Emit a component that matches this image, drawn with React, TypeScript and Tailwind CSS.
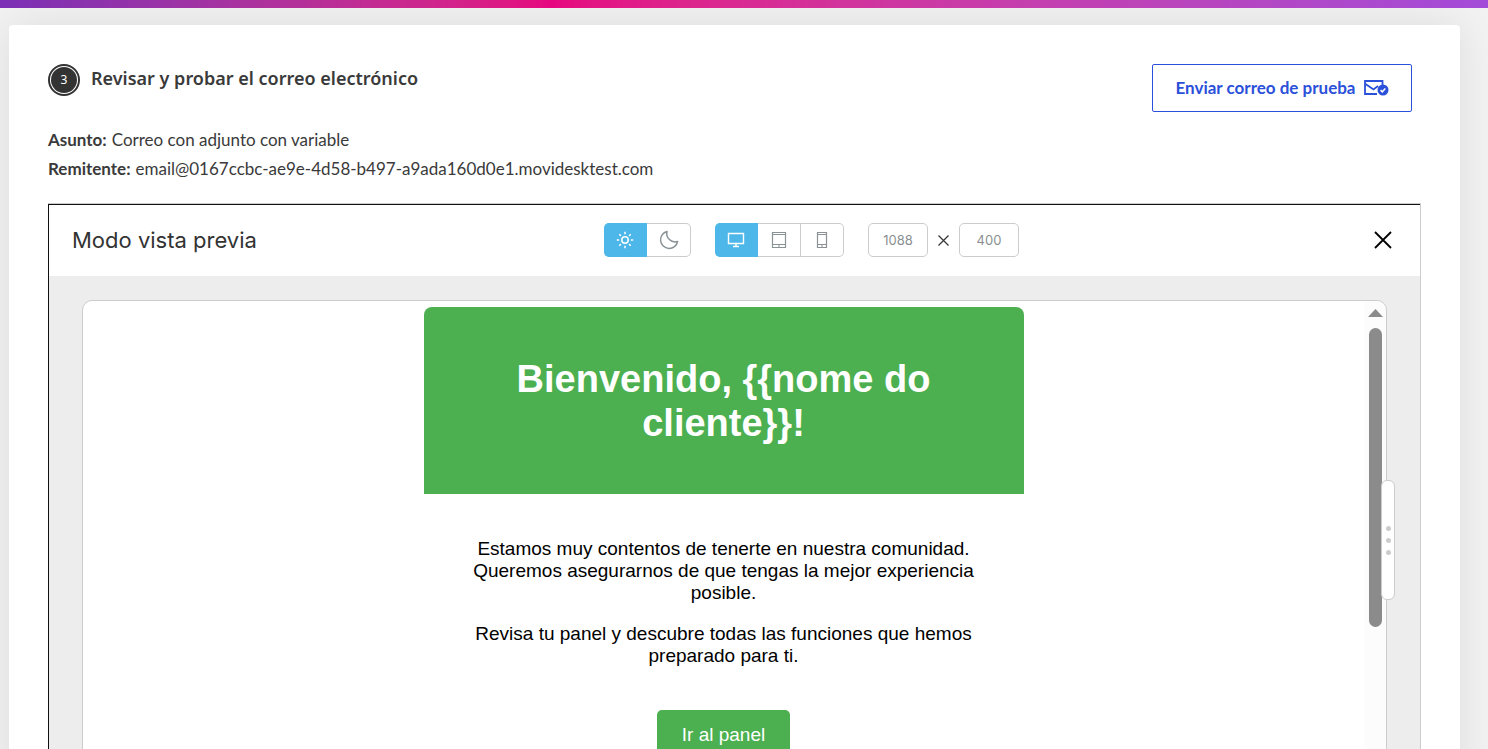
import { useState } from "react";

type Device = "desktop" | "tablet" | "mobile";

const DEVICES: { id: Device; label: string }[] = [
  { id: "desktop", label: "Escritorio" },
  { id: "tablet", label: "Tableta" },
  { id: "mobile", label: "Móvil" },
];

export default function App() {
  return (
    <div className="flex h-screen flex-col overflow-hidden bg-[#f2f2f2] font-['Noto_Sans',sans-serif] text-[#3a3a3a]">
      <div className="relative z-10 h-2 shrink-0 bg-linear-to-r from-[#7b2fb5] via-[#e6067f] via-37% to-[#a34bd9]" />
      <main className="mt-[17px] mr-7 ml-[9px] flex-1 rounded-t bg-white px-[39px] pt-[39px] shadow-[0_0_40px_rgba(0,0,0,0.09)]">
        <StepHeader />
        <dl className="mt-[13px] mb-5 font-['Lato',sans-serif] text-[17px] leading-[29px]">
          <Detail label="Asunto:" value="Correo con adjunto con variable" />
          <Detail
            label="Remitente:"
            value="email@0167ccbc-ae9e-4d58-b497-a9ada160d0e1.movidesktest.com"
          />
        </dl>
        <Preview />
      </main>
    </div>
  );
}

function StepHeader() {
  return (
    <div className="flex items-start justify-between pr-[9px]">
      <div className="flex items-start gap-[11px]">
        <span className="flex size-8 items-center justify-center rounded-full border-2 border-[#333] bg-white p-px">
          <span className="flex size-full items-center justify-center rounded-full bg-[#333] text-xs text-white">
            3
          </span>
        </span>
        <h1 className="text-lg leading-7 font-semibold">
          Revisar y probar el correo electrónico
        </h1>
      </div>
      <button className="flex h-12 w-[260px] items-center justify-center gap-2 rounded-xs border border-[#2b50d9] font-['Lato',sans-serif] text-[17px] font-bold text-[#2b50d9]">
        Enviar correo de prueba
        <MailCheckIcon />
      </button>
    </div>
  );
}

function Detail({ label, value }: { label: string; value: string }) {
  return (
    <div className="flex gap-[5px]">
      <dt className="font-bold">{label}</dt>
      <dd>{value}</dd>
    </div>
  );
}

function Preview() {
  return (
    <section className="border-t border-r border-[#ccc] font-['Inter',sans-serif]">
      <div className="border-t border-l border-[#111]">
        <PreviewToolbar />
        <div className="bg-[#ededed] px-[33px] py-6">
          <div className="relative flex h-[480px] rounded-[10px] border border-[#ccc] bg-white">
            <div className="flex-1 overflow-hidden pt-1.5">
              <EmailBody />
            </div>
            {/* scroll bar of the preview frame */}
            <div className="flex w-[22px] flex-col items-center rounded-r-[10px] bg-[#fcfcfc] pt-2">
              <svg width="15" height="8" viewBox="0 0 15 8" aria-hidden="true">
                <path d="M7.5 0 15 8H0z" fill="#8b8b8b" />
              </svg>
              <div className="mt-[11px] h-[299px] w-[13px] rounded-full bg-[#8b8b8b]" />
            </div>
            {/* handle for resizing the frame */}
            <div className="absolute top-1/2 -right-[9px] flex h-[120px] w-3.5 -translate-y-1/2 flex-col items-center justify-center gap-[7px] rounded-md border border-[#ccc] bg-white">
              <span className="size-[5px] rounded-full bg-[#ccc]" />
              <span className="size-[5px] rounded-full bg-[#ccc]" />
              <span className="size-[5px] rounded-full bg-[#ccc]" />
            </div>
          </div>
        </div>
      </div>
    </section>
  );
}

function PreviewToolbar() {
  const [dark, setDark] = useState(false);
  const [device, setDevice] = useState<Device>("desktop");
  const [width, setWidth] = useState("1088");
  const [height, setHeight] = useState("400");

  return (
    <div className="flex items-center justify-between pt-[18px] pr-5 pb-[19px] pl-[23px]">
      <h2 className="text-[22px] leading-7 text-[#333]">Modo vista previa</h2>
      <div className="flex items-center gap-6">
        <div className="grid h-[34px] w-[87px] grid-cols-2">
          <button
            aria-label="Modo claro"
            className={buttonClass(!dark)}
            onClick={() => setDark(false)}
          >
            <SunIcon />
          </button>
          <button
            aria-label="Modo oscuro"
            className={buttonClass(dark)}
            onClick={() => setDark(true)}
          >
            <MoonIcon />
          </button>
        </div>
        <div className="grid h-[34px] w-[129px] grid-cols-3">
          {DEVICES.map(({ id, label }) => (
            <button
              key={id}
              aria-label={label}
              className={buttonClass(device === id)}
              onClick={() => setDevice(id)}
            >
              <DeviceIcon device={id} />
            </button>
          ))}
        </div>
        <div className="flex items-center gap-2.5">
          <SizeInput label="Ancho" value={width} onChange={setWidth} />
          <svg width="11" height="11" viewBox="0 0 11 11" aria-hidden="true">
            <path d="M.5.5l10 10M10.5.5l-10 10" stroke="#333" strokeWidth="1.2" />
          </svg>
          <SizeInput label="Alto" value={height} onChange={setHeight} />
        </div>
      </div>
      <button
        aria-label="Cerrar"
        className="flex size-[34px] items-center justify-center"
      >
        <svg width="18" height="18" viewBox="0 0 18 18" aria-hidden="true">
          <path d="M1 1l16 16M17 1L1 17" stroke="#000" strokeWidth="1.8" />
        </svg>
      </button>
    </div>
  );
}

function buttonClass(active: boolean) {
  return active
    ? "flex items-center justify-center border-y border-r border-[#4db7ea] bg-[#4db7ea] text-white first:rounded-l-[5px] last:rounded-r-[5px]"
    : "flex items-center justify-center border-y border-r border-[#ccc] bg-white text-[#8a9296] first:rounded-l-[5px] first:border-l last:rounded-r-[5px]";
}

function SizeInput({
  label,
  value,
  onChange,
}: {
  label: string;
  value: string;
  onChange: (value: string) => void;
}) {
  return (
    <input
      aria-label={label}
      value={value}
      onChange={(e) => onChange(e.target.value)}
      className="h-[34px] w-[60px] rounded-[5px] border border-[#ccc] text-center text-[13px] text-[#8a8f92]"
    />
  );
}

function EmailBody() {
  return (
    <div className="mx-auto max-w-[600px] text-center font-['Liberation_Sans',Arial,sans-serif] text-[19px] leading-[22px] text-black">
      <div className="rounded-t-lg bg-[#4caf50] px-[50px] pt-[50px] pb-[49px] text-white">
        <h1 className="text-[38px] leading-[44px] font-bold">
          {"Bienvenido, {{nome do cliente}}!"}
        </h1>
      </div>
      <div className="px-10 pt-11">
        <p>
          Estamos muy contentos de tenerte en nuestra comunidad. Queremos
          asegurarnos de que tengas la mejor experiencia posible.
        </p>
        <p className="mt-[19px]">
          Revisa tu panel y descubre todas las funciones que hemos preparado
          para ti.
        </p>
        <a
          href="#panel"
          className="mt-[43px] inline-block rounded-[5px] bg-[#4caf50] px-[25px] py-[14px] text-white"
        >
          Ir al panel
        </a>
      </div>
    </div>
  );
}

function MailCheckIcon() {
  return (
    <svg width="25" height="17" viewBox="0 0 25 17" fill="none" aria-hidden="true">
      <path
        d="M13 14H1V1h17.500V5M1.500 4l8 5.500 4.500-3.500"
        stroke="currentColor"
        strokeWidth="1.8"
      />
      <circle cx="19" cy="10" r="5.5" fill="currentColor" />
      <path d="M16.6 10.1l1.700 1.700 3-3.200" stroke="#fff" strokeWidth="1.5" />
    </svg>
  );
}

function SunIcon() {
  return (
    <svg width="18" height="18" viewBox="0 0 18 18" fill="none" stroke="currentColor" strokeWidth="1.5" aria-hidden="true">
      <circle cx="9" cy="9" r="3.2" />
      <path d="M9 .8v2.400M9 14.800v2.400M.8 9h2.400M14.800 9h2.400M3.300 3.300l1.600 1.600M13.100 13.100l1.600 1.600M3.300 14.700l1.600-1.600M13.100 4.900l1.600-1.600" />
    </svg>
  );
}

function MoonIcon() {
  return (
    <svg width="20" height="20" viewBox="0 0 20 20" fill="none" stroke="currentColor" strokeWidth="1.5" strokeLinejoin="round" aria-hidden="true">
      <path d="M8 1.500a8.600 8.600 0 1 0 10.600 10A8.400 8.400 0 0 1 8 1.500z" />
    </svg>
  );
}

function DeviceIcon({ device }: { device: Device }) {
  return (
    <svg width="18" height="18" viewBox="0 0 18 18" fill="none" stroke="currentColor" strokeWidth="1.2" aria-hidden="true">
      {device === "desktop" && (
        <path d="M1.500 2.500h15v10h-15zM9 12.500v3.500M6 15.500h6" strokeWidth="1.4" />
      )}
      {device === "tablet" && (
        <path d="M2.500 1.500h13v15h-13zM2.500 3.500h13M2.500 13.500h13M8 15h2" />
      )}
      {device === "mobile" && (
        <path d="M4.500 1.500h9v15h-9zM4.500 3.500h9M4.500 13.500h9M8 15h2" />
      )}
    </svg>
  );
}
